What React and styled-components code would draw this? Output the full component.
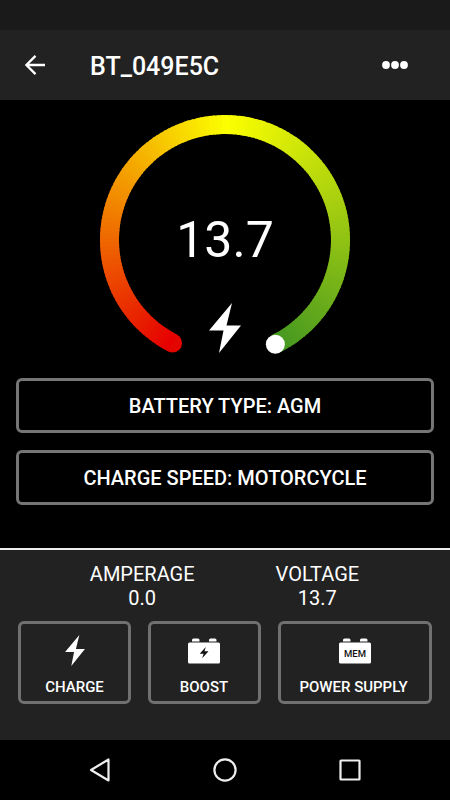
import React from "react";
import styled, { createGlobalStyle } from "styled-components";

const GlobalStyle = createGlobalStyle`
  * {
    box-sizing: border-box;
  }
  body {
    margin: 0;
    background-color: #000;
    font-family: Roboto, "Liberation Sans", sans-serif;
    color: #fff;
  }
`;

const CX = 125;
const CY = 125;
const R = 115.5;
const START = 27;
const END = 334;
const STEPS = 154;

const RED = [230, 0, 0];
const YELLOW = [252, 255, 0];
const GREEN = [66, 150, 34];

// angle is measured clockwise from the bottom of the dial
function point(angle) {
  const a = (angle * Math.PI) / 180;
  return [CX - R * Math.sin(a), CY + R * Math.cos(a)];
}

function colorAt(angle) {
  const left = angle < 180;
  const from = left ? RED : YELLOW;
  const to = left ? YELLOW : GREEN;
  const t = left ? (angle - START) / (180 - START) : (angle - 180) / (END - 180);
  return `rgb(${from.map((c, i) => Math.round(c + (to[i] - c) * t)).join(",")})`;
}

function Gauge({ value }) {
  const size = (END - START) / STEPS;
  const segments = [];
  for (let i = 0; i < STEPS; i++) {
    const a = START + i * size;
    const [x1, y1] = point(a);
    const [x2, y2] = point(Math.min(a + size + 0.6, END));
    segments.push(
      <path
        key={i}
        d={`M${x1} ${y1}A${R} ${R} 0 0 1 ${x2} ${y2}`}
        stroke={colorAt(a)}
        strokeWidth="19"
        fill="none"
      />
    );
  }
  const [sx, sy] = point(START);
  const [ex, ey] = point(END);
  return (
    <Dial>
      <svg width="250" height="250" viewBox="0 0 250 250">
        <circle cx={sx} cy={sy} r="9.5" fill="#e20500" />
        {segments}
        <circle cx={ex - 0.3} cy={ey + 0.4} r="9.5" fill="#fff" />
      </svg>
      <Reading>
        <DialValue>{value}</DialValue>
        <Bolt width="32" height="50" />
      </Reading>
    </Dial>
  );
}

function Bolt(props) {
  return (
    <svg viewBox="0 0 32 50" {...props}>
      <path d="M23 0L0 27.5H14.5L10 50L32 22.5H17.5Z" fill="#fff" />
    </svg>
  );
}

function Battery({ mem }) {
  return (
    <svg width="32" height="26" viewBox="0 0 32 26">
      <path
        d="M4 3.5V2Q4 .5 5.5 .5H10Q11.5 .5 11.5 2V3.5ZM21 3.5V2Q21 .5 22.5 .5H27Q28.5 .5 28.5 2V3.5Z"
        fill="#fff"
      />
      <rect y="4.5" width="32" height="21" rx="1.5" fill="#fff" />
      {mem ? (
        <text
          x="16"
          y="18.5"
          textAnchor="middle"
          fontSize="9.2"
          fontWeight="500"
          textLength="22"
          lengthAdjust="spacingAndGlyphs"
          fill="#111"
        >
          MEM
        </text>
      ) : (
        <path d="M17.8 9L11.7 15.8H15.6L14.2 20.3L20.5 13.3H16.5Z" fill="#111" />
      )}
    </svg>
  );
}

export default function App() {
  return (
    <>
      <GlobalStyle />
      <Screen>
        <StatusBar />
        <Header>
          <svg width="20" height="20" viewBox="0 0 20 20">
            <path
              d="M20 10H2M10.5 .9L1.4 10L10.5 19.1"
              stroke="#fff"
              strokeWidth="2.3"
              fill="none"
            />
          </svg>
          <Title>BT_049E5C</Title>
          <svg width="26" height="8" viewBox="0 0 26 8">
            <circle cx="4" cy="4" r="3.9" fill="#fff" />
            <circle cx="13" cy="4" r="3.9" fill="#fff" />
            <circle cx="22" cy="4" r="3.9" fill="#fff" />
          </svg>
        </Header>
        <Main>
          <Gauge value="13.7" />
          <Options>
            <Option>BATTERY TYPE: AGM</Option>
            <Option>CHARGE SPEED: MOTORCYCLE</Option>
          </Options>
        </Main>
        <Panel>
          <Stats>
            <Stat>
              <span>AMPERAGE</span>
              <span>0.0</span>
            </Stat>
            <Stat>
              <span>VOLTAGE</span>
              <span>13.7</span>
            </Stat>
          </Stats>
          <Modes>
            <Mode>
              <ModeIcon>
                <Bolt width="20" height="31" />
              </ModeIcon>
              CHARGE
            </Mode>
            <Mode $inset="1px">
              <ModeIcon>
                <Battery />
              </ModeIcon>
              BOOST
            </Mode>
            <Mode $inset="3px">
              <ModeIcon $shift="2px">
                <Battery mem />
              </ModeIcon>
              POWER SUPPLY
            </Mode>
          </Modes>
        </Panel>
        <NavBar>
          <svg width="24" height="26" viewBox="0 0 24 26">
            <path
              d="M20.5 2.5V23.5L3 13Z"
              stroke="#eee"
              strokeWidth="2.2"
              strokeLinejoin="round"
              fill="none"
            />
          </svg>
          <svg width="24" height="26" viewBox="0 0 24 26">
            <circle cx="12" cy="13" r="10.6" stroke="#eee" strokeWidth="2.2" fill="none" />
          </svg>
          <svg width="24" height="26" viewBox="0 0 24 26">
            <rect
              x="2.5"
              y="3.5"
              width="19"
              height="19"
              rx=".5"
              stroke="#eee"
              strokeWidth="2.2"
              fill="none"
            />
          </svg>
        </NavBar>
      </Screen>
    </>
  );
}

const Screen = styled.div`
  width: 450px;
  height: 800px;
  display: flex;
  flex-direction: column;
  background-color: #000;
  overflow: hidden;
`;
const StatusBar = styled.div`
  height: 30px;
  background-color: #1a1a1a;
`;
const Header = styled.header`
  height: 70px;
  padding: 0 42px 0 25px;
  display: flex;
  align-items: center;
  background-color: #222;
`;
const Title = styled.h1`
  flex: 1;
  margin: 2px 0 0 45px;
  font-size: 25px;
  font-weight: 500;
`;
const Main = styled.main`
  height: 448px;
  padding: 15px 16px 0;
  display: flex;
  flex-direction: column;
  align-items: center;
`;
const Dial = styled.div`
  display: grid;
  width: 250px;
  height: 250px;
  > * {
    grid-area: 1 / 1;
  }
`;
const Reading = styled.div`
  display: flex;
  flex-direction: column;
  align-items: center;
  padding-top: 95px;
`;
const DialValue = styled.div`
  height: 60px;
  margin-bottom: 32.5px;
  font-size: 50px;
  line-height: 60px;
`;
const Options = styled.div`
  width: 100%;
  margin-top: 13px;
  display: flex;
  flex-direction: column;
  gap: 17px;
`;
const Option = styled.button`
  height: 55px;
  padding: 0;
  border: 3px solid #757575;
  border-radius: 6px;
  background: none;
  color: #fff;
  font-family: inherit;
  font-size: 20px;
  font-weight: 500;
`;
const Panel = styled.section`
  height: 192px;
  padding: 12px 18px 0;
  border-top: 2px solid #eee;
  background-color: #222;
`;
const Stats = styled.div`
  display: flex;
  justify-content: center;
  gap: 81px;
  padding-right: 1px;
`;
const Stat = styled.div`
  display: flex;
  flex-direction: column;
  align-items: center;
  font-size: 20px;
  line-height: 24px;
`;
const Modes = styled.div`
  margin-top: 11px;
  display: grid;
  grid-template-columns: 113px 113px 154px;
  gap: 17px;
`;
const Mode = styled.button`
  height: 83px;
  padding: 0 ${(props) => props.$inset || 0} 0 0;
  display: flex;
  flex-direction: column;
  align-items: center;
  border: 3px solid #707070;
  border-radius: 6px;
  background: none;
  color: #fff;
  font-family: inherit;
  font-size: 15px;
  font-weight: 500;
  line-height: 21px;
`;
const ModeIcon = styled.div`
  height: 53px;
  padding-left: ${(props) => props.$shift || 0};
  display: flex;
  align-items: center;
`;
const NavBar = styled.nav`
  height: 60px;
  padding: 0 88px;
  display: flex;
  align-items: center;
  justify-content: space-between;
`;
